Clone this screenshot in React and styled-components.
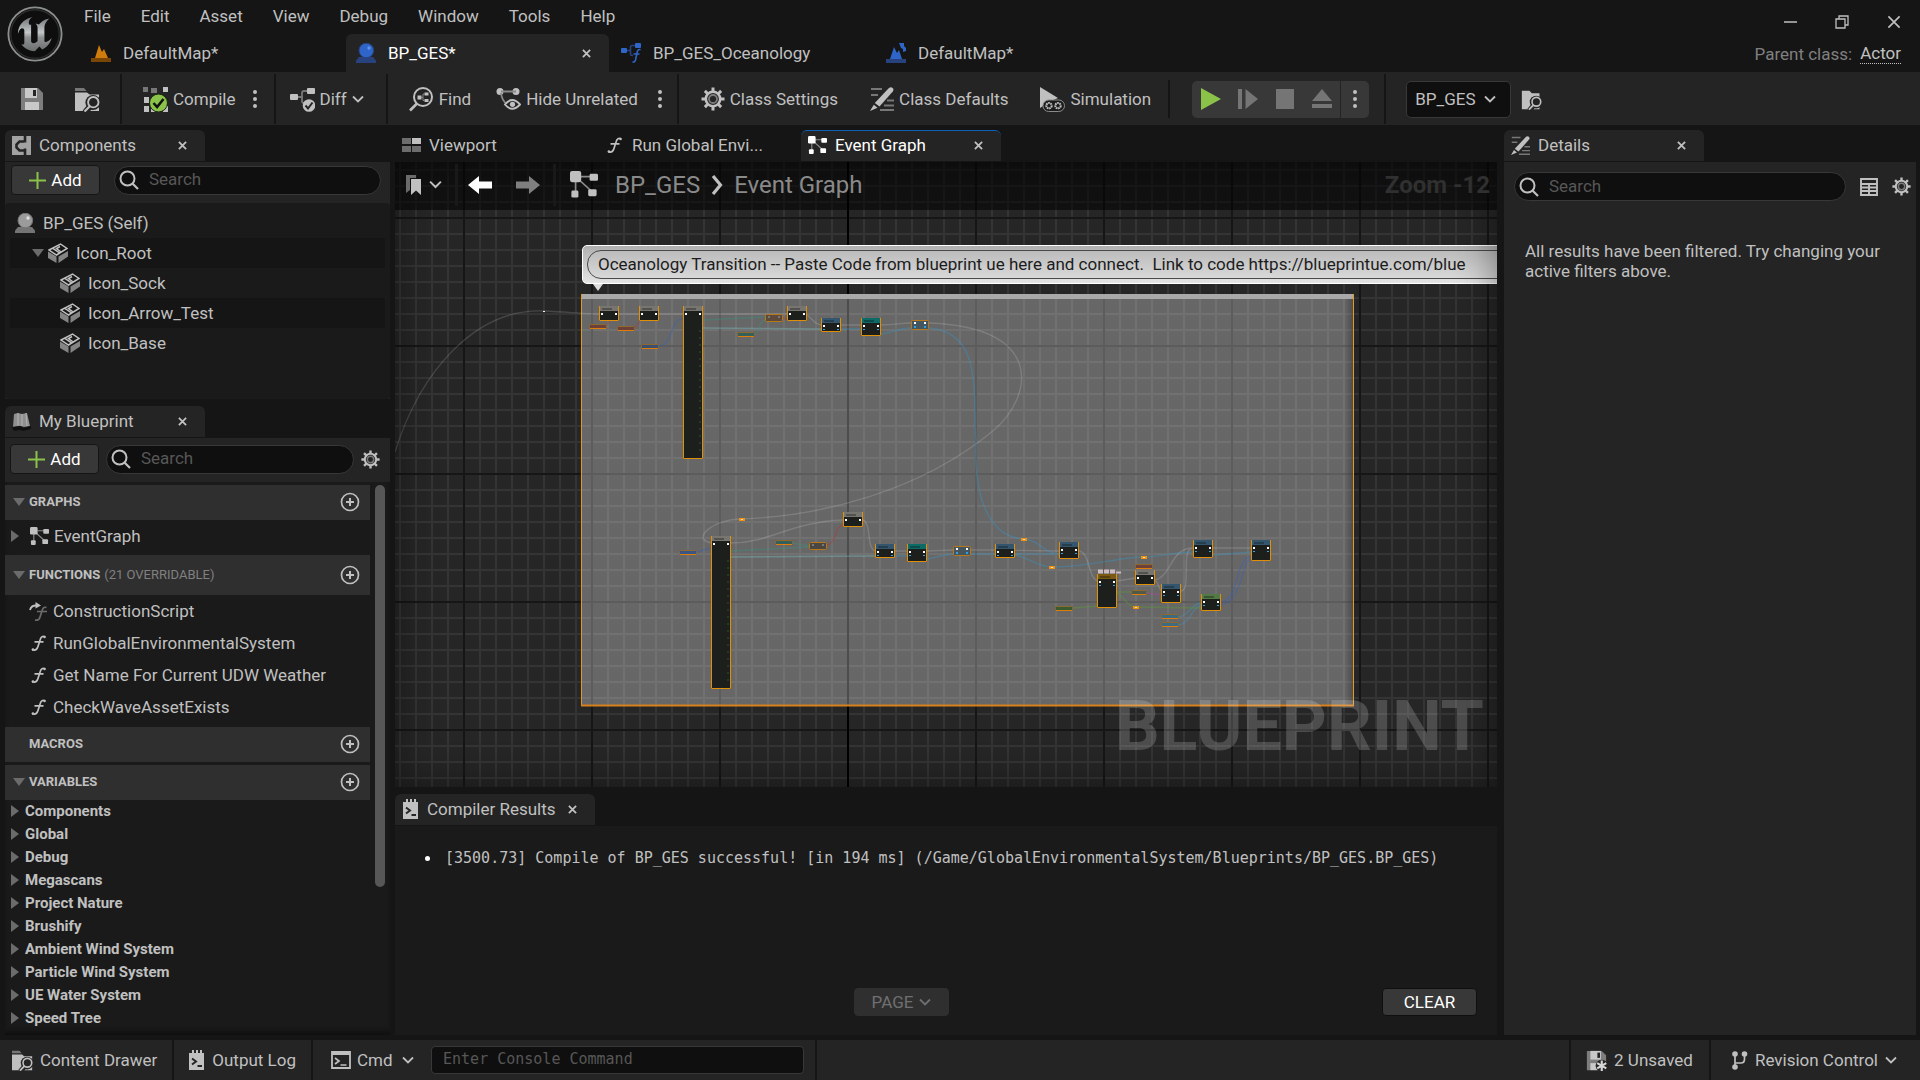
import React from "react";
import styled, { createGlobalStyle } from "styled-components";

const C = {
  frame: "#151515",
  panel: "#242424",
  recess: "#1a1a1a",
  header: "#2f2f2f",
  input: "#0f0f0f",
  button: "#383838",
  line: "#383838",
  text: "#c0c0c0",
  dim: "#808080",
  white: "#ffffff",
  green: "#8bc24a",
  blue: "#2f64c8",
};
const SANS = 'Roboto, "Noto Sans", "Liberation Sans", sans-serif';
const MONO = '"DejaVu Sans Mono", "Liberation Mono", monospace';

const Global = createGlobalStyle`
  *, *::before, *::after { box-sizing: border-box; }
  body {
    margin: 0;
    background: ${C.frame};
    color: ${C.text};
    font: 400 17px/20px ${SANS};
    overflow: hidden;
  }
  button, input, select {
    font: inherit;
    color: inherit;
    margin: 0;
    padding: 0;
    border: 0;
    background: none;
    outline: none;
  }
  button { cursor: pointer; white-space: nowrap; }
  ul { list-style: none; margin: 0; padding: 0; }
  h2, p { margin: 0; font: inherit; }
  svg { display: block; flex: none; }
`;

/* ---------- shell ---------- */
const Shell = styled.div`
  height: 100vh;
  display: grid;
  grid-template-rows: 72px 53px minmax(0, 1fr) 40px;
`;
const Title = styled.header`
  display: flex;
  padding-left: 7px;
`;
const LogoBox = styled.div`
  width: 62px;
  padding-top: 6px;
`;
const TitleMain = styled.div`
  flex: 1;
  display: grid;
  grid-template-rows: 34px 38px;
`;
const MenuBar = styled.nav`
  display: flex;
  align-items: center;
  padding-bottom: 3px;
`;
const MenuItem = styled.button`
  padding: 0 15px;
`;
const MainTabs = styled.div`
  display: flex;
  gap: 2px;
  padding-left: 12px;
`;
const MainTab = styled.div`
  width: 263px;
  display: flex;
  align-items: center;
  gap: 12px;
  padding: 0 16px 0 10px;
  border-radius: 6px 6px 0 0;
  background: ${(p) => (p.$active ? C.panel : "transparent")};
  color: ${(p) => (p.$active ? C.white : C.text)};
`;
const TabLabel = styled.button`
  flex: 1;
  text-align: left;
`;
const TitleSide = styled.div`
  display: grid;
  grid-template-rows: 38px 34px;
  padding-right: 19px;
  justify-items: end;
`;
const WindowButtons = styled.div`
  display: flex;
  align-items: center;
  gap: 38px;
  padding-top: 5px;
`;
const ParentClass = styled.div`
  display: flex;
  gap: 8px;
  align-items: center;
  padding-bottom: 3px;
  color: ${C.dim};
`;
const ParentLink = styled.a`
  color: ${C.text};
  text-decoration: none;
  border-bottom: 1px dotted ${C.text};
`;

/* ---------- toolbar ---------- */
const Toolbar = styled.div`
  display: flex;
  align-items: stretch;
  background: ${C.panel};
  padding: 2px 0 1px;
`;
const Group = styled.div`
  display: flex;
  align-items: center;
  gap: ${(p) => p.$gap || 0}px;
  padding: 0 ${(p) => p.$end ?? 10}px 0 ${(p) => p.$start ?? 10}px;
`;
const Rule = styled.div`
  width: 2px;
  background: ${C.frame};
  margin: ${(p) => (p.$short ? "6px 0" : "0")};
`;
const Tool = styled.button`
  display: flex;
  align-items: center;
  gap: 5px;
  padding: 0 10px;
  height: 44px;
`;
const MoreButton = styled.button`
  display: grid;
  place-items: center;
  width: 18px;
  height: 36px;
`;
const PlayGroup = styled.div`
  display: flex;
  height: 37px;
  border-radius: 5px;
  background: ${C.button};
  overflow: hidden;
`;
const PlayButton = styled.button`
  display: grid;
  place-items: center;
  width: ${(p) => (p.$more ? 29 : 37)}px;
  border-left: ${(p) => (p.$more ? "1px solid " + C.panel : "0")};
`;
const PickBox = styled.label`
  position: relative;
  display: flex;
  align-items: center;
  svg {
    position: absolute;
    right: ${(p) => p.$inset || 0}px;
    pointer-events: none;
  }
`;
const Pick = styled.select`
  appearance: none;
  cursor: pointer;
  height: ${(p) => (p.$boxed ? 37 : 30)}px;
  padding: ${(p) => (p.$boxed ? "0 34px 0 8px" : "0 26px 0 0")};
  border-radius: 5px;
  background: ${(p) => (p.$boxed ? C.input : "transparent")};
  border: ${(p) => (p.$boxed ? "1px solid " + C.line : "0")};
`;

/* ---------- docked panels ---------- */
const Body = styled.main`
  display: grid;
  grid-template-columns: 385px minmax(0, 1fr) 412px;
  column-gap: 5px;
  padding: 5px 4px 5px 5px;
  min-height: 0;
`;
const Column = styled.div`
  display: flex;
  flex-direction: column;
  min-width: 0;
  min-height: 0;
  gap: 7px;
  padding-right: ${(p) => p.$end || 0}px;
`;
const Dock = styled.section`
  display: flex;
  flex-direction: column;
  min-height: 0;
  flex: ${(p) => p.$flex || "1 1 0"};
`;
const DockTabs = styled.div`
  display: flex;
  gap: 3px;
  height: 32px;
  padding-bottom: 1px;
`;
const DockTab = styled.div`
  width: 200px;
  display: flex;
  align-items: center;
  gap: 8px;
  padding: 0 16px 2px 7px;
  border-radius: 6px 6px 0 0;
  color: ${(p) => (p.$focus ? C.white : C.text)};
  background: ${(p) => (p.$open ? C.panel : "transparent")};
  border-top: 1px solid ${(p) => (p.$focus ? "#0d60b8" : "transparent")};
`;
const CloseButton = styled.button`
  width: 14px;
  height: 20px;
  display: grid;
  place-items: center;
  color: ${C.text};
`;
const DockBody = styled.div`
  flex: 1;
  min-height: 0;
  background: ${(p) => (p.$recess ? C.recess : C.panel)};
  display: flex;
  flex-direction: column;
`;
const FilterRow = styled.div`
  display: flex;
  align-items: center;
  gap: ${(p) => p.$gap || 6}px;
  height: ${(p) => p.$h}px;
  flex: none;
  padding: 0 ${(p) => p.$end}px ${(p) => p.$lift || 0}px ${(p) => p.$start ?? 6}px;
`;
const AddButton = styled.button`
  width: 89px;
  height: 30px;
  display: flex;
  align-items: center;
  justify-content: center;
  gap: 5px;
  border-radius: 4px;
  border: 1px solid ${C.frame};
  background: ${C.button};
  color: ${C.white};
`;
const SearchBox = styled.label`
  flex: 1;
  min-width: 0;
  height: 29px;
  display: flex;
  align-items: center;
  gap: 10px;
  padding: 0 4px;
  border-radius: 15px;
  border: 1px solid ${C.line};
  background: ${C.input};
`;
const Field = styled.input`
  flex: 1;
  min-width: 0;
  padding-bottom: 2px;
  &::placeholder {
    color: #575757;
    opacity: 1;
  }
`;
const IconButton = styled.button`
  display: grid;
  place-items: center;
`;

const Tree = styled.ul`
  flex: 1;
  background: ${C.recess};
  border-radius: 4px;
  padding: 5px;
`;
const TreeRow = styled.li`
  height: 30px;
  display: flex;
  align-items: center;
  gap: 8px;
  padding-left: ${(p) => [5, 22, 50][p.$depth]}px;
  background: ${(p) => (p.$alt ? C.frame : "transparent")};
`;
const ArrowSlot = styled.span`
  margin-right: -4px;
`;

const ListArea = styled.div`
  flex: 1;
  min-height: 0;
  display: flex;
  background: ${C.recess};
  padding: 3px 5px 0 0;
  gap: 5px;
  box-shadow: inset 0 -6px 6px -4px #0c0c0c;
`;
const List = styled.div`
  flex: 1;
  overflow: hidden;
`;
const ScrollTrack = styled.div`
  width: 10px;
`;
const ScrollThumb = styled.div`
  height: 73%;
  border-radius: 5px;
  background: #575757;
`;
const SectionHead = styled.div`
  height: ${(p) => (p.$tall ? 40 : 35)}px;
  margin-top: ${(p) => (p.$apart ? 3 : 0)}px;
  display: flex;
  align-items: center;
  gap: 4px;
  padding: 0 10px 1px 8px;
  background: ${C.header};
  font-size: 13px;
`;
const SectionTitle = styled.h2`
  flex: 1;
  display: flex;
  gap: 4px;
  font-weight: 700;
`;
const SectionNote = styled.span`
  font-weight: 400;
  color: ${C.dim};
`;
const Slot = styled.span`
  width: 12px;
`;
const GraphRow = styled.div`
  height: 35px;
  display: flex;
  align-items: center;
  gap: 5px;
  padding: 0 0 3px 6px;
`;
const GraphMark = styled.span`
  margin-left: 6px;
`;
const FunctionList = styled.ul`
  padding-bottom: 4px;
`;
const FunctionRow = styled.li`
  height: 32px;
  display: flex;
  align-items: center;
  gap: 5px;
  padding-left: 24px;
`;
const VariableRow = styled.li`
  height: 23px;
  display: flex;
  align-items: center;
  gap: 6px;
  padding: 0 0 2px 6px;
  font-size: 15px;
  font-weight: 700;
`;

/* ---------- graph canvas ---------- */
const Canvas = styled.div`
  position: relative;
  flex: 1;
  min-height: 0;
  overflow: hidden;
  background-color: #262626;
  background-image: linear-gradient(90deg, #000 2px, transparent 2px),
    linear-gradient(90deg, #161616 2px, transparent 2px),
    linear-gradient(#161616 2px, transparent 2px),
    linear-gradient(90deg, #343434 2px, transparent 2px),
    linear-gradient(#343434 2px, transparent 2px);
  background-size: 4096px 100%, 128px 128px, 128px 128px, 16px 16px, 16px 16px;
  background-position: 452px 0, 68px 0, 0 55px, 4px 0, 0 7px;
`;
const Wires = styled.svg`
  position: absolute;
  left: 0;
  top: 0;
  width: 1102px;
  height: 625px;
`;
const Vignette = styled.div`
  position: absolute;
  inset: 0;
  box-shadow: inset 0 0 40px rgba(0, 0, 0, 0.45);
  pointer-events: none;
`;
const CrumbBar = styled.div`
  position: absolute;
  left: 0;
  right: 0;
  top: 0;
  height: 48px;
  display: flex;
  align-items: center;
  padding: 0 7px 3px 11px;
  background: rgba(0, 0, 0, 0.55);
`;
const CrumbGroup = styled.div`
  display: flex;
  align-items: center;
  gap: ${(p) => p.$gap}px;
  padding: 0 ${(p) => p.$end || 0}px 0 ${(p) => p.$start || 0}px;
`;
const CrumbRule = styled.div`
  width: 3px;
  height: 42px;
  background: #191919;
`;
const Crumb = styled.button`
  font-size: 24px;
  line-height: 28px;
  color: #8a8a8a;
`;
const CrumbMark = styled.span`
  padding-right: 6px;
`;
const ZoomLevel = styled.div`
  margin-left: auto;
  font: 700 24px/32px ${SANS};
  color: #303030;
`;
const Watermark = styled.div`
  position: absolute;
  right: 13px;
  bottom: 22px;
  font: 700 70px/78px ${SANS};
  color: rgba(255, 255, 255, 0.18);
`;
const Bubble = styled.div`
  position: absolute;
  left: 187px;
  top: 83px;
  width: 1100px;
  height: 39px;
  padding: 4px;
  border: 1px solid #fff;
  border-radius: 5px;
  background: linear-gradient(#b0b0b0, #e4e4e4);
  &::after {
    content: "";
    position: absolute;
    left: 10px;
    top: 38px;
    border: 5px solid transparent;
    border-top: 7px solid #ddd;
    border-bottom: 0;
  }
`;
const BubbleText = styled.div`
  height: 29px;
  padding-left: 10px;
  border: 1px solid #4a4a4a;
  border-radius: 14px;
  background: linear-gradient(#bcbcbc, #d8d8d8);
  color: #1c1c1c;
  line-height: 27px;
  white-space: pre;
`;

/* ---------- log, details, status ---------- */
const Log = styled.ul`
  flex: 1;
  padding: 21px 0 0 30px;
  font: 400 15px/22px ${MONO};
`;
const LogLine = styled.li`
  display: flex;
  align-items: center;
  gap: 15px;
`;
const Dot = styled.span`
  width: 5px;
  height: 5px;
  border-radius: 50%;
  background: ${C.white};
`;
const LogActions = styled.div`
  display: grid;
  grid-template-columns: 1fr 95px 1fr 95px;
  padding: 0 20px 19px 26px;
`;
const SmallButton = styled.button`
  height: 28px;
  display: flex;
  align-items: center;
  justify-content: center;
  gap: 6px;
  border-radius: 4px;
  border: 1px solid ${(p) => (p.disabled ? "#2f2f2f" : C.input)};
  background: ${(p) => (p.disabled ? "#2f2f2f" : C.button)};
  color: ${(p) => (p.disabled ? "#6f6f6f" : C.white)};
`;
const Notice = styled.p`
  padding: 30px 16px 0 21px;
`;
const Status = styled.footer`
  display: flex;
  gap: 2px;
`;
const StatusPart = styled.div`
  display: flex;
  align-items: center;
  gap: 6px;
  padding: 0 ${(p) => p.$end ?? 15}px 0 ${(p) => p.$start ?? 12}px;
  background: ${C.panel};
  flex: ${(p) => (p.$grow ? 1 : "none")};
`;
const StatusButton = styled.button`
  display: flex;
  align-items: center;
  gap: 7px;
`;
const Console = styled.input`
  width: 373px;
  height: 28px;
  margin-left: 6px;
  padding: 0 11px 3px;
  border: 1px solid ${C.line};
  border-radius: 4px;
  background: ${C.input};
  font: 400 15px/20px ${MONO};
  &::placeholder {
    color: #575757;
    opacity: 1;
  }
`;

/* ---------- icons ---------- */
const Svg = ({ w = 20, h, vw, vh, children }) => (
  <svg width={w} height={h || w} viewBox={`0 0 ${vw || w} ${vh || vw || h || w}`} fill="none" aria-hidden="true">
    {children}
  </svg>
);
const Logo = () => (
  <Svg w={56} vw={24}>
    <defs>
      <linearGradient id="metal" x1="0" y1="0" x2="0" y2="1">
        <stop offset="0" stopColor="#6f7375" />
        <stop offset="0.45" stopColor="#c3c7c9" />
        <stop offset="0.6" stopColor="#8e9293" />
        <stop offset="1" stopColor="#6b6f70" />
      </linearGradient>
    </defs>
    <circle cx="12" cy="12" r="11.4" fill="#0e0e0e" stroke="#8c8f90" strokeWidth="0.8" />
    <circle cx="12" cy="12" r="10.4" stroke="#2c2c2c" strokeWidth="0.6" />
    <path
      fill="url(#metal)"
      d="M19.13 13.729c-.206.997-1.126 3.557-4.06 4.942l-1.179-1.325-1.988 2a7.338 7.338 0 0 1-5.804-2.978 2.859 2.859 0 0 0 .65.123c.326.006.678-.114.678-.66v-5.394a.89.89 0 0 0-1.116-.89c-.92.212-1.656 2.509-1.656 2.509a7.304 7.304 0 0 1 2.528-5.597 7.408 7.408 0 0 1 3.73-1.721c-1.006.573-1.57 1.507-1.57 2.29 0 1.262.76 1.109.984.923v7.28a1.157 1.157 0 0 0 .148.256 1.075 1.075 0 0 0 .88.445c.76 0 1.747-.868 1.747-.868V9.172c0-.6-.452-1.324-.905-1.572 0 0 .838-.149 1.484.346a5.537 5.537 0 0 1 .387-.425c1.508-1.48 2.929-1.902 4.112-2.112 0 0-2.151 1.69-2.151 3.96 0 1.687.043 5.801.043 5.801.799.771 1.986-.342 3.059-1.441Z"
    />
  </Svg>
);
const XMark = ({ s = 9, t = 2 }) => (
  <Svg w={s} vw={10}>
    <path d="M1 1l8 8M9 1L1 9" stroke="currentColor" strokeWidth={t} />
  </Svg>
);
const Chevron = ({ c = C.text, w = 12 }) => (
  <Svg w={w} h={(w * 2) / 3} vw={12} vh={8}>
    <path d="M1 1.5l5 5 5-5" stroke={c} strokeWidth="1.8" />
  </Svg>
);
const Dots = () => (
  <Svg w={4} h={18}>
    {[2, 9, 16].map((y) => (
      <circle key={y} cx="2" cy={y} r="2" fill={C.text} />
    ))}
  </Svg>
);
const MapIcon = () => (
  <Svg w={20}>
    <path d="M0 15h20v4H0z" fill="#7a4606" />
    <path d="M4 15L8 2l3 7 2-3 4 9z" fill="#cf7c0c" />
  </Svg>
);
const LevelIcon = () => (
  <Svg w={20}>
    <path d="M0 16h20v4H0z" fill="#27427c" />
    <path d="M4 16L8 4l3 6 2-3 3 9z" fill={C.blue} />
    <path d="M13 0h5v3l2 2v3l-3 1v-3l-2-1z" fill={C.blue} />
  </Svg>
);
const ActorIcon = ({ a = C.blue, b = "#27427c", s = "#5f93ee" }) => (
  <Svg w={20}>
    <path d="M0 20h20v-2.5L17 14H3l-3 3.500z" fill={b} />
    <circle cx="10.300" cy="7.500" r="7.300" fill={a} stroke={b} />
    <circle cx="13" cy="5" r="1.700" fill={s} />
  </Svg>
);
const FuncBlueIcon = () => (
  <Svg w={20}>
    <rect y="5" width="6" height="5" rx="1" fill={C.blue} />
    <rect x="14" width="6" height="5" rx="1" fill={C.blue} />
    <path d="M6 7.500h3.500M14 2.500h-3q-1.500 0-1.500 1.500v7q0 1.500 1.500 1.500h1" stroke="#27427c" strokeWidth="1.600" />
    <path d="M19.500 6.800q-2.500-1-3.300 2.200l-1.700 8q-.7 2.600-3 1.800M12.500 11h6" stroke={C.blue} strokeWidth="1.600" />
  </Svg>
);
const FIcon = ({ c = C.text, w = 19 }) => (
  <Svg w={w} vw={19}>
    <path d="M16 2.800q-3.600-1.400-4.700 2.400L8.800 13q-1.200 4-5.300 2.800M5.500 7.800h9" stroke={c} strokeWidth="1.700" />
    <circle cx="15.600" cy="3" r="1.300" fill={c} />
    <circle cx="3.900" cy="15.600" r="1.300" fill={c} />
  </Svg>
);
const ConstructIcon = () => (
  <Svg w={19}>
    <path d="M17.500 5.500q-3-1-4 2L11 15q-1 4-5 3M8 9.500h10" stroke="#6b6b6b" strokeWidth="1.700" />
    <path d="M1 8q1-4.500 6-4.500" stroke={C.text} strokeWidth="1.800" />
    <path d="M6.500 0l5.500 3.400-5.500 3.200z" fill={C.text} />
  </Svg>
);
const SaveIcon = ({ w = 24, star }) => (
  <Svg w={w} vw={24}>
    <path d="M1 1h17l5 5v17H1z" fill="#7d7d7d" />
    <path d="M5 1h12v10H5z" fill="#c9c9c9" />
    <path d="M13 3h3v6h-3z" fill={C.panel} />
    <path d="M5 15h14v8H5z" fill="#c9c9c9" />
    {star && (
      <g>
        <circle cx="18" cy="18" r="7" fill={C.panel} />
        <path d="M18 12v12M12.800 15l10.400 6M23.200 15l-10.400 6" stroke="#d8d8d8" strokeWidth="2.400" />
      </g>
    )}
  </Svg>
);
const BrowseIcon = ({ w = 25, plain }) => (
  <Svg w={w} vw={25}>
    {!plain && <path d="M0 1h9l2.500 3H0z" fill="#777" />}
    <path d={plain ? "M1 2h9l3 3h9v19H1z" : "M0 5.500h12l2.500 2H24V24H0z"} fill={C.text} />
    <circle cx="18" cy="15.500" r="7.600" fill={C.panel} />
    <path d="M10 25.500l5-6" stroke={C.panel} strokeWidth="6" />
    <circle cx="18.300" cy="15.200" r="5.200" stroke={C.text} strokeWidth="1.900" />
    <path d="M15 19l-5.500 5.500" stroke={C.text} strokeWidth="2.200" />
  </Svg>
);
const CompileIcon = () => (
  <Svg w={25}>
    <path d="M0 0h5v5H0zM8 1h6v5H8z" fill="#777" />
    <path d="M20 0h5v5h-5zM1 19h5v6H1z" fill={C.text} />
    <path d="M1 10h5v6H1zM8 19h5v6H8zM20 19h5v6h-5z" fill={C.text} />
    <circle cx="15.500" cy="16" r="9" fill={C.green} stroke="#1b2410" />
    <path d="M10.500 16l3.600 4 6.400-8" stroke="#111" strokeWidth="2.600" />
  </Svg>
);
const DiffIcon = () => (
  <Svg w={25}>
    <rect y="7" width="8" height="6" rx="1" fill={C.text} />
    <rect x="17" y="1" width="8" height="6" rx="1" fill={C.text} />
    <path d="M8 10h5M17 4h-3q-2 0-2 2v8q0 2 2 2" stroke="#777" strokeWidth="1.800" />
    <circle cx="19" cy="18.500" r="6.300" fill={C.text} />
    <path d="M15.500 18.500l2.500 3 4.500-6" stroke={C.panel} strokeWidth="2" />
  </Svg>
);
const FindIcon = () => (
  <Svg w={25}>
    <circle cx="14" cy="10" r="9" stroke={C.text} strokeWidth="2" />
    <path d="M8 16.500l-7 7" stroke={C.text} strokeWidth="2.600" />
    <path d="M8.500 8.500h4v4h-4zM15.500 5.500h4v3h-4zM15.500 12h4v3h-4z" fill={C.text} />
    <path d="M15.500 7h-1.500v6.500h1.500M12 10.500h2" stroke="#888" />
  </Svg>
);
const HideIcon = () => (
  <Svg w={25}>
    <circle cx="4" cy="4.500" r="3.500" fill={C.text} />
    <circle cx="20" cy="4.500" r="3.500" fill={C.text} />
    <path d="M5 4.500h15M5 6q1 8 6 11" stroke="#888" strokeWidth="1.800" />
    <path d="M9 17.500q7-9 15 0-8 8.500-15 0z" fill={C.panel} stroke={C.text} strokeWidth="1.900" />
    <circle cx="16.500" cy="17.300" r="2.600" fill={C.text} />
  </Svg>
);
const GearIcon = ({ w = 24, core = "#7b7b7b" }) => (
  <Svg w={w} vw={24}>
    <g stroke={C.text} strokeWidth="3">
      {[0, 45, 90, 135].map((a) => (
        <path key={a} d="M12 .5v4M12 19.500v4" transform={`rotate(${a} 12 12)`} />
      ))}
    </g>
    <circle cx="12" cy="12" r="7.200" stroke={C.text} strokeWidth="2.600" />
    <circle cx="12" cy="12" r="4" stroke={core} strokeWidth="1.800" />
  </Svg>
);
const PencilIcon = ({ w = 24 }) => (
  <Svg w={w} vw={24}>
    <path d="M1 2h11M1 8h7M17 13.500h7M14 18.500h10M10 23h14" stroke="#777" strokeWidth="1.800" />
    <path d="M17.500 2.500L19 1q2-1.500 3.600 0t.2 3.400L9.500 19.500 4.800 16z" fill={C.text} />
    <path d="M3.800 17.800l3.700 2.900L0 24z" fill={C.text} />
  </Svg>
);
const SimIcon = () => (
  <Svg w={25}>
    <path d="M0 0l18 11-9 4-9 6z" fill={C.text} />
    <rect x="3" y="13" width="21.500" height="11.500" rx="5.700" fill="#1c1c1c" stroke="#8a8a8a" />
    {[9, 18].map((x) => (
      <circle key={x} cx={x} cy="18.700" r="2.700" stroke={C.text} strokeWidth="2" strokeDasharray="1.700 .6" />
    ))}
  </Svg>
);
const GraphIcon = ({ w = 19, c = C.text }) => (
  <Svg w={w} vw={20}>
    <path d="M4 4h13M4 4v12M4 4l12 11" stroke="#8a8a8a" strokeWidth="1.200" />
    <rect width="8" height="8" rx="1.500" fill={c} />
    <rect x="14" y="2" width="6" height="5" rx="1" fill={c} />
    <rect x="1" y="14" width="5" height="5" rx="1" fill={c} />
    <rect x="13" y="13" width="6" height="5" rx="1" fill={c} />
  </Svg>
);
const ViewportIcon = () => (
  <Svg w={19}>
    <path d="M0 2h9v6H0zM0 10h9v6H0zM10 10h9v6h-9z" fill="#6d6d6d" />
    <path d="M10 2h9v6h-9z" fill={C.text} />
  </Svg>
);
const ComponentsIcon = () => (
  <Svg w={19}>
    <path d="M0 0h19v19H0z" fill="#a2a2a2" />
    <path d="M12 5.500H7.500L4.500 8.500v3l3 3H12M13 0v6.500M13 19v-6.500" stroke="#242424" strokeWidth="2.600" />
  </Svg>
);
const BookIcon = () => (
  <Svg w={19}>
    <path d="M2 2l4-1 4 1 5-1 3 13-6 1-3-1-8 1z" fill="#8f8f8f" />
    <path d="M0 15l8-1 3 2 8-2v3l-8 2-3-1-6 1z" fill="#101010" />
    <path d="M6 1v12M10 2v12M14 1l1 13" stroke="#bdbdbd" strokeWidth=".8" />
  </Svg>
);
const MeshIcon = () => (
  <Svg w={20}>
    <path d="M0 8.500l8.500 5V20L0 15zM10.500 13.500L20 8v5.500L10.500 20z" fill="#848484" />
    <path d="M1 7L12.500 1l6.500 4.500L8.500 12zM4.500 5.200l7 4.600M12.500 8.500l-4-3 3.500-2" stroke={C.text} strokeWidth="1.500" />
  </Svg>
);
const DownTri = () => (
  <Svg w={12} h={8}>
    <path d="M0 0h12L6 8z" fill="#6b6b6b" />
  </Svg>
);
const RightTri = () => (
  <Svg w={8} h={12}>
    <path d="M0 0l8 6-8 6z" fill="#6b6b6b" />
  </Svg>
);
const PlusIcon = () => (
  <Svg w={17}>
    <path d="M8.500 0v17M0 8.500h17" stroke={C.green} strokeWidth="2" />
  </Svg>
);
const SearchIcon = () => (
  <Svg w={20}>
    <circle cx="8.500" cy="8.500" r="7" stroke={C.text} strokeWidth="2" />
    <path d="M13.500 13.500l5.500 5.500" stroke={C.text} strokeWidth="2.200" />
  </Svg>
);
const AddCircle = () => (
  <Svg w={20}>
    <circle cx="10" cy="10" r="8.500" stroke={C.text} strokeWidth="1.700" />
    <path d="M10 6v8M6 10h8" stroke={C.text} strokeWidth="2" />
  </Svg>
);
const LogIcon = () => (
  <Svg w={17} h={20}>
    <path d="M1 3h3V0h2v3h2V0h2v3h2V0h2v3h2v17H1z" fill={C.text} />
    <path d="M4 8.500l4 3-4 3M9.500 16h4.500" stroke={C.panel} strokeWidth="2" />
  </Svg>
);
const CmdIcon = () => (
  <Svg w={20} h={18}>
    <path d="M1 1h18v16H1z" stroke={C.text} strokeWidth="1.800" />
    <path d="M1 3h18" stroke={C.text} strokeWidth="2" />
    <path d="M4 7l4 3-4 3M9.500 14h6" stroke={C.text} strokeWidth="1.700" />
  </Svg>
);
const BranchIcon = () => (
  <Svg w={17} h={19}>
    <path d="M4 3v13M4 12h6q3.500 0 3.500-4V4" stroke={C.text} strokeWidth="1.700" />
    <circle cx="4" cy="3" r="2.800" fill={C.text} />
    <circle cx="13.500" cy="3" r="2.800" fill={C.text} />
    <circle cx="4" cy="16" r="2.800" fill={C.text} />
  </Svg>
);
const TableIcon = () => (
  <Svg w={18}>
    <path d="M1 1h16v16H1zM1 6h16M1 9.500h16M1 13h16M9 6v11" stroke={C.text} strokeWidth="1.900" />
  </Svg>
);
const MarksIcon = () => (
  <Svg w={16} h={20}>
    <path d="M0 0h10v3H4v12l-4 3z" fill="#6b6b6b" />
    <path d="M5 4h10v16l-5-4.500L5 20z" fill={C.text} />
  </Svg>
);
const Arrow = ({ c, flip }) => (
  <Svg w={24} h={18}>
    <path d="M0 9L11 0v5.500h13v7H11V18z" fill={c} transform={flip ? "matrix(-1 0 0 1 24 0)" : undefined} />
  </Svg>
);
const CrumbArrow = () => (
  <Svg w={12} h={20}>
    <path d="M2 1l7.500 9L2 19" stroke={C.text} strokeWidth="3.200" />
  </Svg>
);

/* ---------- graph drawing ---------- */
const HEAD = { gray: "#77756f", blue: "#33566e", teal: "#0c6b66", gold: "#7a5a10", green: "#527a45" };
const NODES = [
  [599, 306, 15, "gray"], [639, 306, 15, "gray"], [683, 306, 153, "gray"], [787, 306, 15, "gray"],
  [821, 318, 14, "blue"], [861, 318, 18, "teal"],
  [711, 536, 153, "gray"], [843, 512, 15, "gray"], [875, 544, 14, "blue"], [907, 544, 18, "teal"],
  [995, 544, 14, "blue"], [1059, 542, 17, "blue"], [1097, 574, 34, "gold"], [1135, 570, 15, "gray"],
  [1161, 584, 19, "blue"], [1201, 594, 17, "green"], [1193, 540, 18, "blue"], [1251, 540, 21, "blue"],
];
const PILLS = [
  [589, 324, 18, "#6d4038"], [617, 326, 18, "#6d4038"], [641, 344, 18, "#3c4f6e"], [737, 332, 18, "#35605a"],
  [679, 550, 18, "#3a5585"], [775, 540, 18, "#35605a"], [1055, 606, 18, "#3c5a30"], [1135, 564, 18, "#6d4038"],
  [1131, 590, 16, "#4f5a4a"], [1161, 614, 18, "#3f6b80"], [1161, 622, 18, "#3f6b80"],
];
const MINIS = [
  [765, 314, 18, 8, "#5d4a3a"], [911, 320, 18, 10, "#46565e"], [809, 542, 18, 8, "#4b4640"], [953, 546, 18, 10, "#46565e"],
];
const REROUTES = [[739, 518], [1021, 538], [1049, 566], [1141, 556], [1133, 606]];
const WIRES = [
  ["#ffffff", "M395 452C420 372 475 308 544 311C570 312 580 314 600 314H787M807 315C812 318 814 324 821 325H881C895 325 900 323 911 323M929 323C1047 327 1032 398 994 430C920 492 820 516 742 519C712 519 690 540 712 543"],
  ["#ffffff", "M731 543C770 543 790 522 843 520M863 520C872 524 866 550 876 551H927L953 550H995L1059 551M1079 551C1090 552 1088 579 1098 581M1117 581L1136 578M1155 580C1160 584 1158 590 1162 591M1155 580C1172 576 1170 548 1193 548M1181 591C1192 590 1180 548 1193 548M1213 548H1252"],
  ["#2f9fd8", "M841 329H861M881 334C895 332 900 328 911 328M929 328C985 332 972 400 976 440C974 490 985 536 1023 539C1040 540 1044 554 1060 554M895 556H907M927 559C935 558 940 555 953 554M971 554H1059M1015 555C1030 558 1038 567 1052 567C1090 567 1120 557 1144 557C1160 557 1175 552 1194 552M1213 555L1252 552"],
  ["#2f9fd8", "M1179 617C1190 615 1190 605 1202 602M1179 625C1192 622 1190 608 1202 605"],
  ["#2f62d0", "M659 346C675 344 668 320 684 318M697 552L711 548M1221 602C1240 600 1234 558 1252 556M1221 605C1244 600 1240 562 1252 558"],
  ["#7fd0d0", "M703 328L821 329M731 557L875 556"],
  ["#2f9a80", "M703 320L765 317M755 334C760 332 758 322 765 320M731 551L809 547M793 543L809 546"],
  ["#5aa82a", "M1073 608L1098 606M1117 592H1131M1117 593C1125 598 1128 607 1134 607L1202 608"],
  ["#c03fb0", "M1147 593L1161 595"],
  ["#c03030", "M607 324L612 319M635 328L641 320M827 545C838 542 834 526 843 525M783 318L788 320"],
];
const GraphNode = ({ n: [x, y, h, kind] }) => (
  <g>
    <rect x={x} y={y} width="20" height={h} fill="#1c1f1c" />
    <rect x={x + 1} y={y} width="18" height="5" fill={HEAD[kind]} />
    <rect x={x + 3} y={y + 2} width="10" height="2" fill="#111" opacity=".35" />
    <path d={`M${x + 2} ${y + 7}h2v2h-2zM${x + 16} ${y + 7}h2v2h-2z`} fill="#fff" />
    {h < 50 && kind !== "gray" && <path d={`M${x + 2} ${y + 11}h2v1h-2zM${x + 16} ${y + 11}h2v1h-2z`} fill="#3aa0e0" />}
    {h > 50 && <path d={`M${x + 17} ${y + 24}V${y + h - 3}`} stroke="#2a5a22" strokeDasharray="2 5" />}
    <path d={`M${x + 0.5} ${y}V${y + h - 0.5}H${x + 19.5}V${y}`} fill="none" stroke="#e08f08" />
  </g>
);
const GraphDrawing = () => (
  <Wires aria-hidden="true">
    <defs>
      <linearGradient id="edge" x1="0" x2="1">
        <stop offset="0" stopColor="#000" stopOpacity="0" />
        <stop offset="1" stopColor="#000" stopOpacity=".25" />
      </linearGradient>
    </defs>
    <g transform="translate(-395 -162)">
      <rect x="581" y="294" width="773" height="412" fill="#fff" opacity=".3" />
      <rect x="1344" y="299" width="9" height="406" fill="url(#edge)" />
      <rect x="581" y="294" width="773" height="5" fill="#a9a9a9" />
      <path d="M581.500 294V705M1353.500 294V705" stroke="#e09a20" />
      <path d="M581 705.500H1354" stroke="#d8801a" strokeWidth="2" />
      {WIRES.map(([c, d], i) => (
        <path key={i} d={d} stroke={c} strokeWidth="1.400" fill="none" opacity={c === "#ffffff" ? 0.15 : 0.34} />
      ))}
      <rect x="543" y="311" width="2" height="1" fill="#eee" />
      <path d="M1098 570.500h17M1098 572.500h24" stroke="#e0ccd0" strokeWidth="2" strokeDasharray="5 1" opacity=".85" />
      {NODES.map((n) => (
        <GraphNode key={n.join()} n={n} />
      ))}
      {PILLS.map(([x, y, w, c]) => (
        <g key={`${x},${y}`}>
          <rect x={x + 0.5} y={y + 0.5} width={w - 1} height="4" rx="1" fill={c} stroke="#8c6a30" />
          <path d={`M${x + 1} ${y + 4.5}h${w - 2}`} stroke="#e07c08" />
        </g>
      ))}
      {MINIS.map(([x, y, w, h, c]) => (
        <g key={`${x},${y}`}>
          <rect x={x + 0.5} y={y + 0.5} width={w - 1} height={h - 1} rx="1" fill={c} stroke="#b8781a" />
          <path d={`M${x + 3} ${y + 2}h2v2h-2zM${x + w - 5} ${y + 2}h2v2h-2z`} fill={h > 8 ? "#fff" : "#777"} />
          {h > 8 && <path d={`M${x + 3} ${y + 6}h2v2h-2zM${x + w - 5} ${y + 6}h2v2h-2z`} fill="#2fa0e0" />}
        </g>
      ))}
      {REROUTES.map(([x, y]) => (
        <g key={`${x},${y}`}>
          <rect x={x} y={y} width="6" height="3" fill="#f0920c" />
          <rect x={x + 2} y={y + 1} width="2" height="1" fill="#ddd" />
        </g>
      ))}
    </g>
  </Wires>
);

/* ---------- page parts ---------- */
const MENUS = ["File", "Edit", "Asset", "View", "Debug", "Window", "Tools", "Help"];
const MAIN_TABS = [
  { label: "DefaultMap*", icon: <MapIcon /> },
  { label: "BP_GES*", icon: <ActorIcon />, active: true },
  { label: "BP_GES_Oceanology", icon: <FuncBlueIcon /> },
  { label: "DefaultMap*", icon: <LevelIcon /> },
];
const FUNCTIONS = ["RunGlobalEnvironmentalSystem", "Get Name For Current UDW Weather", "CheckWaveAssetExists"];
const VARIABLES = [
  "Components", "Global", "Debug", "Megascans", "Project Nature", "Brushify",
  "Ambient Wind System", "Particle Wind System", "UE Water System", "Speed Tree",
];

const PanelTab = ({ icon, label, open, focus, closable }) => (
  <DockTab $open={open} $focus={focus}>
    {icon}
    <TabLabel>{label}</TabLabel>
    {closable && (
      <CloseButton aria-label={`Close ${label}`}>
        <XMark />
      </CloseButton>
    )}
  </DockTab>
);
const Search = ({ label }) => (
  <SearchBox>
    <SearchIcon />
    <Field type="text" placeholder="Search" aria-label={label} />
  </SearchBox>
);
const Section = ({ title, note, tall, apart, empty }) => (
  <SectionHead $tall={tall} $apart={apart}>
    {empty ? <Slot /> : <DownTri />}
    <SectionTitle>
      {title}
      {note && <SectionNote>{note}</SectionNote>}
    </SectionTitle>
    <IconButton aria-label={`Add to ${title}`}>
      <AddCircle />
    </IconButton>
  </SectionHead>
);

const TitleBar = () => (
  <Title>
    <LogoBox>
      <Logo />
    </LogoBox>
    <TitleMain>
      <MenuBar>
        {MENUS.map((m) => (
          <MenuItem key={m}>{m}</MenuItem>
        ))}
      </MenuBar>
      <MainTabs>
        {MAIN_TABS.map((t, i) => (
          <MainTab key={i} $active={t.active}>
            {t.icon}
            <TabLabel>{t.label}</TabLabel>
            {t.active && (
              <CloseButton aria-label="Close BP_GES">
                <XMark />
              </CloseButton>
            )}
          </MainTab>
        ))}
      </MainTabs>
    </TitleMain>
    <TitleSide>
      <WindowButtons>
        <IconButton aria-label="Minimize">
          <Svg w={13}>
            <path d="M0 7h13" stroke={C.text} strokeWidth="1.500" />
          </Svg>
        </IconButton>
        <IconButton aria-label="Restore">
          <Svg w={14}>
            <path d="M1 4h9v9H1zM4 4V1h9v9h-3" stroke={C.text} strokeWidth="1.300" />
          </Svg>
        </IconButton>
        <IconButton aria-label="Close window">
          <XMark s={14} t={1.2} />
        </IconButton>
      </WindowButtons>
      <ParentClass>
        Parent class: <ParentLink href="#actor">Actor</ParentLink>
      </ParentClass>
    </TitleSide>
  </Title>
);

const MainToolbar = () => (
  <Toolbar>
    <Group $gap={11}>
      <Tool aria-label="Save"><SaveIcon /></Tool>
      <Tool aria-label="Browse"><BrowseIcon /></Tool>
    </Group>
    <Rule />
    <Group $start={11}>
      <Tool><CompileIcon />Compile</Tool>
      <MoreButton aria-label="Compile options"><Dots /></MoreButton>
    </Group>
    <Rule />
    <Group $start={4} $end={12}>
      <Tool><DiffIcon />Diff<Chevron /></Tool>
    </Group>
    <Rule />
    <Group $gap={5} $start={11} $end={8}>
      <Tool><FindIcon />Find</Tool>
      <Group $start={0} $end={0} $gap={3}>
        <Tool><HideIcon />Hide Unrelated</Tool>
        <MoreButton aria-label="Hide options"><Dots /></MoreButton>
      </Group>
    </Group>
    <Rule />
    <Group $gap={12} $start={12} $end={7}>
      <Tool><GearIcon />Class Settings</Tool>
      <Tool><PencilIcon />Class Defaults</Tool>
      <Tool><SimIcon />Simulation</Tool>
    </Group>
    <Rule $short />
    <Group $start={22} $end={15}>
      <PlayGroup>
        <PlayButton aria-label="Play">
          <Svg w={20} h={22}><path d="M0 0l20 11L0 22z" fill={C.green} /></Svg>
        </PlayButton>
        <PlayButton aria-label="Step">
          <Svg w={20}><path d="M0 0h4v20H0zM7.500 0L20 10 7.500 20z" fill="#757575" /></Svg>
        </PlayButton>
        <PlayButton aria-label="Stop">
          <Svg w={18} h={20}><path d="M0 0h18v20H0z" fill="#757575" /></Svg>
        </PlayButton>
        <PlayButton aria-label="Eject">
          <Svg w={20}><path d="M10 0l10 12H0zM0 15h20v4H0z" fill="#757575" /></Svg>
        </PlayButton>
        <PlayButton $more aria-label="Play options"><Dots /></PlayButton>
      </PlayGroup>
    </Group>
    <Rule />
    <Group $start={20}>
      <PickBox $inset={15}>
        <Pick $boxed aria-label="Debug object" defaultValue="BP_GES">
          <option>BP_GES</option>
        </Pick>
        <Chevron />
      </PickBox>
      <Tool aria-label="Browse to object"><BrowseIcon w={21} plain /></Tool>
    </Group>
  </Toolbar>
);

const LeftColumn = () => (
  <Column>
    <Dock $flex="0 0 269px">
      <DockTabs>
        <PanelTab icon={<ComponentsIcon />} label="Components" open closable />
      </DockTabs>
      <DockBody>
        <FilterRow $h={41} $gap={14} $end={9} $lift={5}>
          <AddButton><PlusIcon />Add</AddButton>
          <Search label="Search components" />
        </FilterRow>
        <Tree>
          <TreeRow $depth={0}>
            <ActorIcon a="#9b9b9b" b="#747474" s="#e0e0e0" />
            BP_GES (Self)
          </TreeRow>
          <TreeRow $depth={1} $alt>
            <ArrowSlot><DownTri /></ArrowSlot>
            <MeshIcon />
            Icon_Root
          </TreeRow>
          {["Icon_Sock", "Icon_Arrow_Test", "Icon_Base"].map((n, i) => (
            <TreeRow key={n} $depth={2} $alt={i === 1}>
              <MeshIcon />
              {n}
            </TreeRow>
          ))}
        </Tree>
      </DockBody>
    </Dock>
    <Dock>
      <DockTabs>
        <PanelTab icon={<BookIcon />} label="My Blueprint" open closable />
      </DockTabs>
      <DockBody>
        <FilterRow $h={44} $gap={7} $start={5} $end={10} $lift={2}>
          <AddButton><PlusIcon />Add</AddButton>
          <Search label="Search blueprint" />
          <IconButton aria-label="Blueprint settings"><GearIcon w={19} /></IconButton>
        </FilterRow>
        <ListArea>
          <List>
            <Section title="GRAPHS" />
            <GraphRow>
              <RightTri />
              <GraphMark><GraphIcon /></GraphMark>
              EventGraph
            </GraphRow>
            <Section title="FUNCTIONS" note="(21 OVERRIDABLE)" tall />
            <FunctionList>
              <FunctionRow><ConstructIcon />ConstructionScript</FunctionRow>
              {FUNCTIONS.map((f) => (
                <FunctionRow key={f}><FIcon />{f}</FunctionRow>
              ))}
            </FunctionList>
            <Section title="MACROS" empty />
            <Section title="VARIABLES" apart />
            <ul>
              {VARIABLES.map((v) => (
                <VariableRow key={v}><RightTri />{v}</VariableRow>
              ))}
            </ul>
          </List>
          <ScrollTrack><ScrollThumb /></ScrollTrack>
        </ListArea>
      </DockBody>
    </Dock>
  </Column>
);

const CenterColumn = () => (
  <Column $end={2}>
    <Dock>
      <DockTabs>
        <PanelTab icon={<ViewportIcon />} label="Viewport" />
        <PanelTab icon={<FIcon />} label="Run Global Envi..." />
        <PanelTab icon={<GraphIcon c="#fff" />} label="Event Graph" open focus closable />
      </DockTabs>
      <Canvas>
        <GraphDrawing />
        <Bubble>
          <BubbleText>
            {"Oceanology Transition -- Paste Code from blueprint ue here and connect.  Link to code https://blueprintue.com/blue"}
          </BubbleText>
        </Bubble>
        <Watermark>BLUEPRINT</Watermark>
        <Vignette />
        <CrumbBar>
          <CrumbGroup $gap={7} $end={13}>
            <MarksIcon />
            <Chevron w={13} />
          </CrumbGroup>
          <CrumbRule />
          <CrumbGroup $gap={24} $start={10} $end={13}>
            <IconButton aria-label="Back"><Arrow c="#fff" /></IconButton>
            <IconButton aria-label="Forward"><Arrow c="#7f7f7f" flip /></IconButton>
          </CrumbGroup>
          <CrumbRule />
          <CrumbGroup $gap={11} $start={14}>
            <CrumbMark><GraphIcon w={28} /></CrumbMark>
            <Crumb>BP_GES</Crumb>
            <CrumbArrow />
            <Crumb>Event Graph</Crumb>
          </CrumbGroup>
          <ZoomLevel>Zoom -12</ZoomLevel>
        </CrumbBar>
      </Canvas>
    </Dock>
    <Dock $flex="0 0 241px">
      <DockTabs>
        <PanelTab icon={<LogIcon />} label="Compiler Results" open closable />
      </DockTabs>
      <DockBody $recess>
        <Log>
          <LogLine>
            <Dot />
            [3500.73] Compile of BP_GES successful! [in 194 ms] (/Game/GlobalEnvironmentalSystem/Blueprints/BP_GES.BP_GES)
          </LogLine>
        </Log>
        <LogActions>
          <span />
          <SmallButton disabled>PAGE<Chevron c="#6f6f6f" /></SmallButton>
          <span />
          <SmallButton>CLEAR</SmallButton>
        </LogActions>
      </DockBody>
    </Dock>
  </Column>
);

const RightColumn = () => (
  <Column>
    <Dock>
      <DockTabs>
        <PanelTab icon={<PencilIcon w={19} />} label="Details" open closable />
      </DockTabs>
      <DockBody>
        <FilterRow $h={49} $gap={14} $start={10} $end={5}>
          <Search label="Search details" />
          <IconButton aria-label="Property matrix"><TableIcon /></IconButton>
          <IconButton aria-label="Details settings"><GearIcon w={19} /></IconButton>
        </FilterRow>
        <Notice>All results have been filtered. Try changing your active filters above.</Notice>
      </DockBody>
    </Dock>
  </Column>
);

const StatusBar = () => (
  <Status>
    <StatusPart>
      <StatusButton><BrowseIcon w={21} />Content Drawer</StatusButton>
    </StatusPart>
    <StatusPart $start={14}>
      <StatusButton><LogIcon />Output Log</StatusButton>
    </StatusPart>
    <StatusPart $start={18} $end={11}>
      <CmdIcon />
      <PickBox $inset={5}>
        <Pick aria-label="Console type" defaultValue="Cmd">
          <option>Cmd</option>
        </Pick>
        <Chevron />
      </PickBox>
      <Console type="text" placeholder="Enter Console Command" aria-label="Console command" />
    </StatusPart>
    <StatusPart $grow />
    <StatusPart $start={15} $end={16}>
      <StatusButton><SaveIcon w={21} star />2 Unsaved</StatusButton>
    </StatusPart>
    <StatusPart $start={20} $end={23}>
      <StatusButton><BranchIcon />Revision Control<Chevron /></StatusButton>
    </StatusPart>
  </Status>
);

export default function App() {
  return (
    <>
      <Global />
      <Shell>
        <TitleBar />
        <MainToolbar />
        <Body>
          <LeftColumn />
          <CenterColumn />
          <RightColumn />
        </Body>
        <StatusBar />
      </Shell>
    </>
  );
}
